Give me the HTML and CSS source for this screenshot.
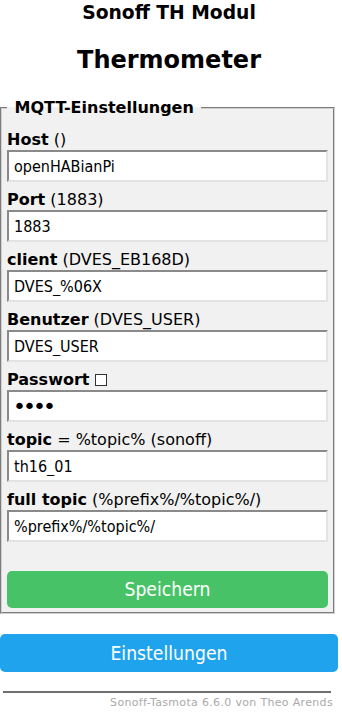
FILE: index.html
```html
<!DOCTYPE html>
<html lang="de">

<head>
    <meta charset="UTF-8">
    <meta name="viewport" content="width=device-width, initial-scale=1.0">
    <title>Sonoff TH Modul - MQTT</title>
    <link rel="stylesheet" href="styles.css">
</head>

<body>
    <div class="page">
        <div class="head">
            <h3>Sonoff TH Modul</h3>
            <h2>Thermometer</h2>
        </div>
        <fieldset class="box">
            <legend><b>&nbsp;MQTT-Einstellungen&nbsp;</b></legend>
            <form method="get" action="sv">
                <p class="row"><label><b>Host</b> ()</label><input class="txt" id="mh" value="openHABianPi"></p>
                <p class="row"><label><b>Port</b> (1883)</label><input class="txt" id="ml" value="1883"></p>
                <p class="row"><label><b>client</b> (DVES_EB168D)</label><input class="txt" id="mc" value="DVES_%06X"></p>
                <p class="row"><label><b>Benutzer</b> (DVES_USER)</label><input class="txt" id="mu" value="DVES_USER"></p>
                <p class="row"><label><b>Passwort</b> <span class="tick"></span></label><input class="txt pw" id="mp" type="password" value="1234"></p>
                <p class="row"><label><b>topic</b> = %topic% (sonoff)</label><input class="txt" id="mt" value="th16_01"></p>
                <p class="row"><label><b>full topic</b> (%prefix%/%topic%/)</label><input class="txt" id="mf" value="%prefix%/%topic%/"></p>
                <button class="btn save" type="button">Speichern</button>
            </form>
        </fieldset>
        <button class="btn main" type="button">Einstellungen</button>
        <div class="foot">
            <hr>
            <span class="credit">Sonoff-Tasmota 6.6.0 von Theo Arends</span>
        </div>
    </div>
</body>

</html>
```

FILE: styles.css
```css
body {
    margin: 0;
    padding: 0;
    background: #fff;
    color: #000;
    font-family: "DejaVu Sans", Verdana, sans-serif;
    font-size: 16px;
}

.page {
    width: 338px;
}

.head {
    text-align: center;
}

.head h3 {
    font-size: 18.72px;
    line-height: 22px;
    margin: 2px 0 0;
}

.head h2 {
    font-size: 24px;
    line-height: 28px;
    margin: 22px 0 24px;
}

.box {
    margin: 0 3px 0 0;
    padding: 4px 5px 4px;
    border: 2px groove #d0d0d0;
    background: #f1f1f1;
    min-width: 0;
}

.box legend {
    padding: 0 2px;
    line-height: 20px;
}

.row {
    margin: 8px 0;
}

.row label {
    display: block;
    line-height: 20px;
}

.tick {
    display: inline-block;
    width: 10px;
    height: 10px;
    border: 1px solid #333;
    background: #fff;
    vertical-align: -1px;
}

.txt {
    display: block;
    width: 100%;
    height: 32px;
    box-sizing: border-box;
    margin: 0;
    padding: 0 5px;
    border: 2px solid;
    border-color: #8a8a8a #e3e3e3 #e3e3e3 #8a8a8a;
    background: #fff;
    color: #000;
    font-family: "DejaVu Sans Condensed", "Liberation Sans", sans-serif;
    font-size: 16px;
}

.pw {
    font-family: "DejaVu Sans", sans-serif;
    font-size: 22px;
    letter-spacing: -3px;
    padding-left: 4px;
}

.btn {
    display: block;
    width: 100%;
    padding: 0;
    border: 0;
    border-radius: 5px;
    color: #fff;
    font-family: "DejaVu Sans Condensed", "Liberation Sans", sans-serif;
    font-size: 19.2px;
}

.save {
    height: 37px;
    margin-top: 29px;
    background: #47c266;
}

.main {
    height: 38px;
    margin-top: 20px;
    background: #1fa3ec;
}

.foot {
    text-align: right;
    font-size: 11px;
    line-height: 14px;
    padding-right: 5px;
}

.foot hr {
    height: 0;
    margin: 19px 2px 3px 3px;
    border: 0;
    border-top: 2px solid #6e6e6e;
}

.credit {
    color: #aaa;
    letter-spacing: 0.33px;
}
```
